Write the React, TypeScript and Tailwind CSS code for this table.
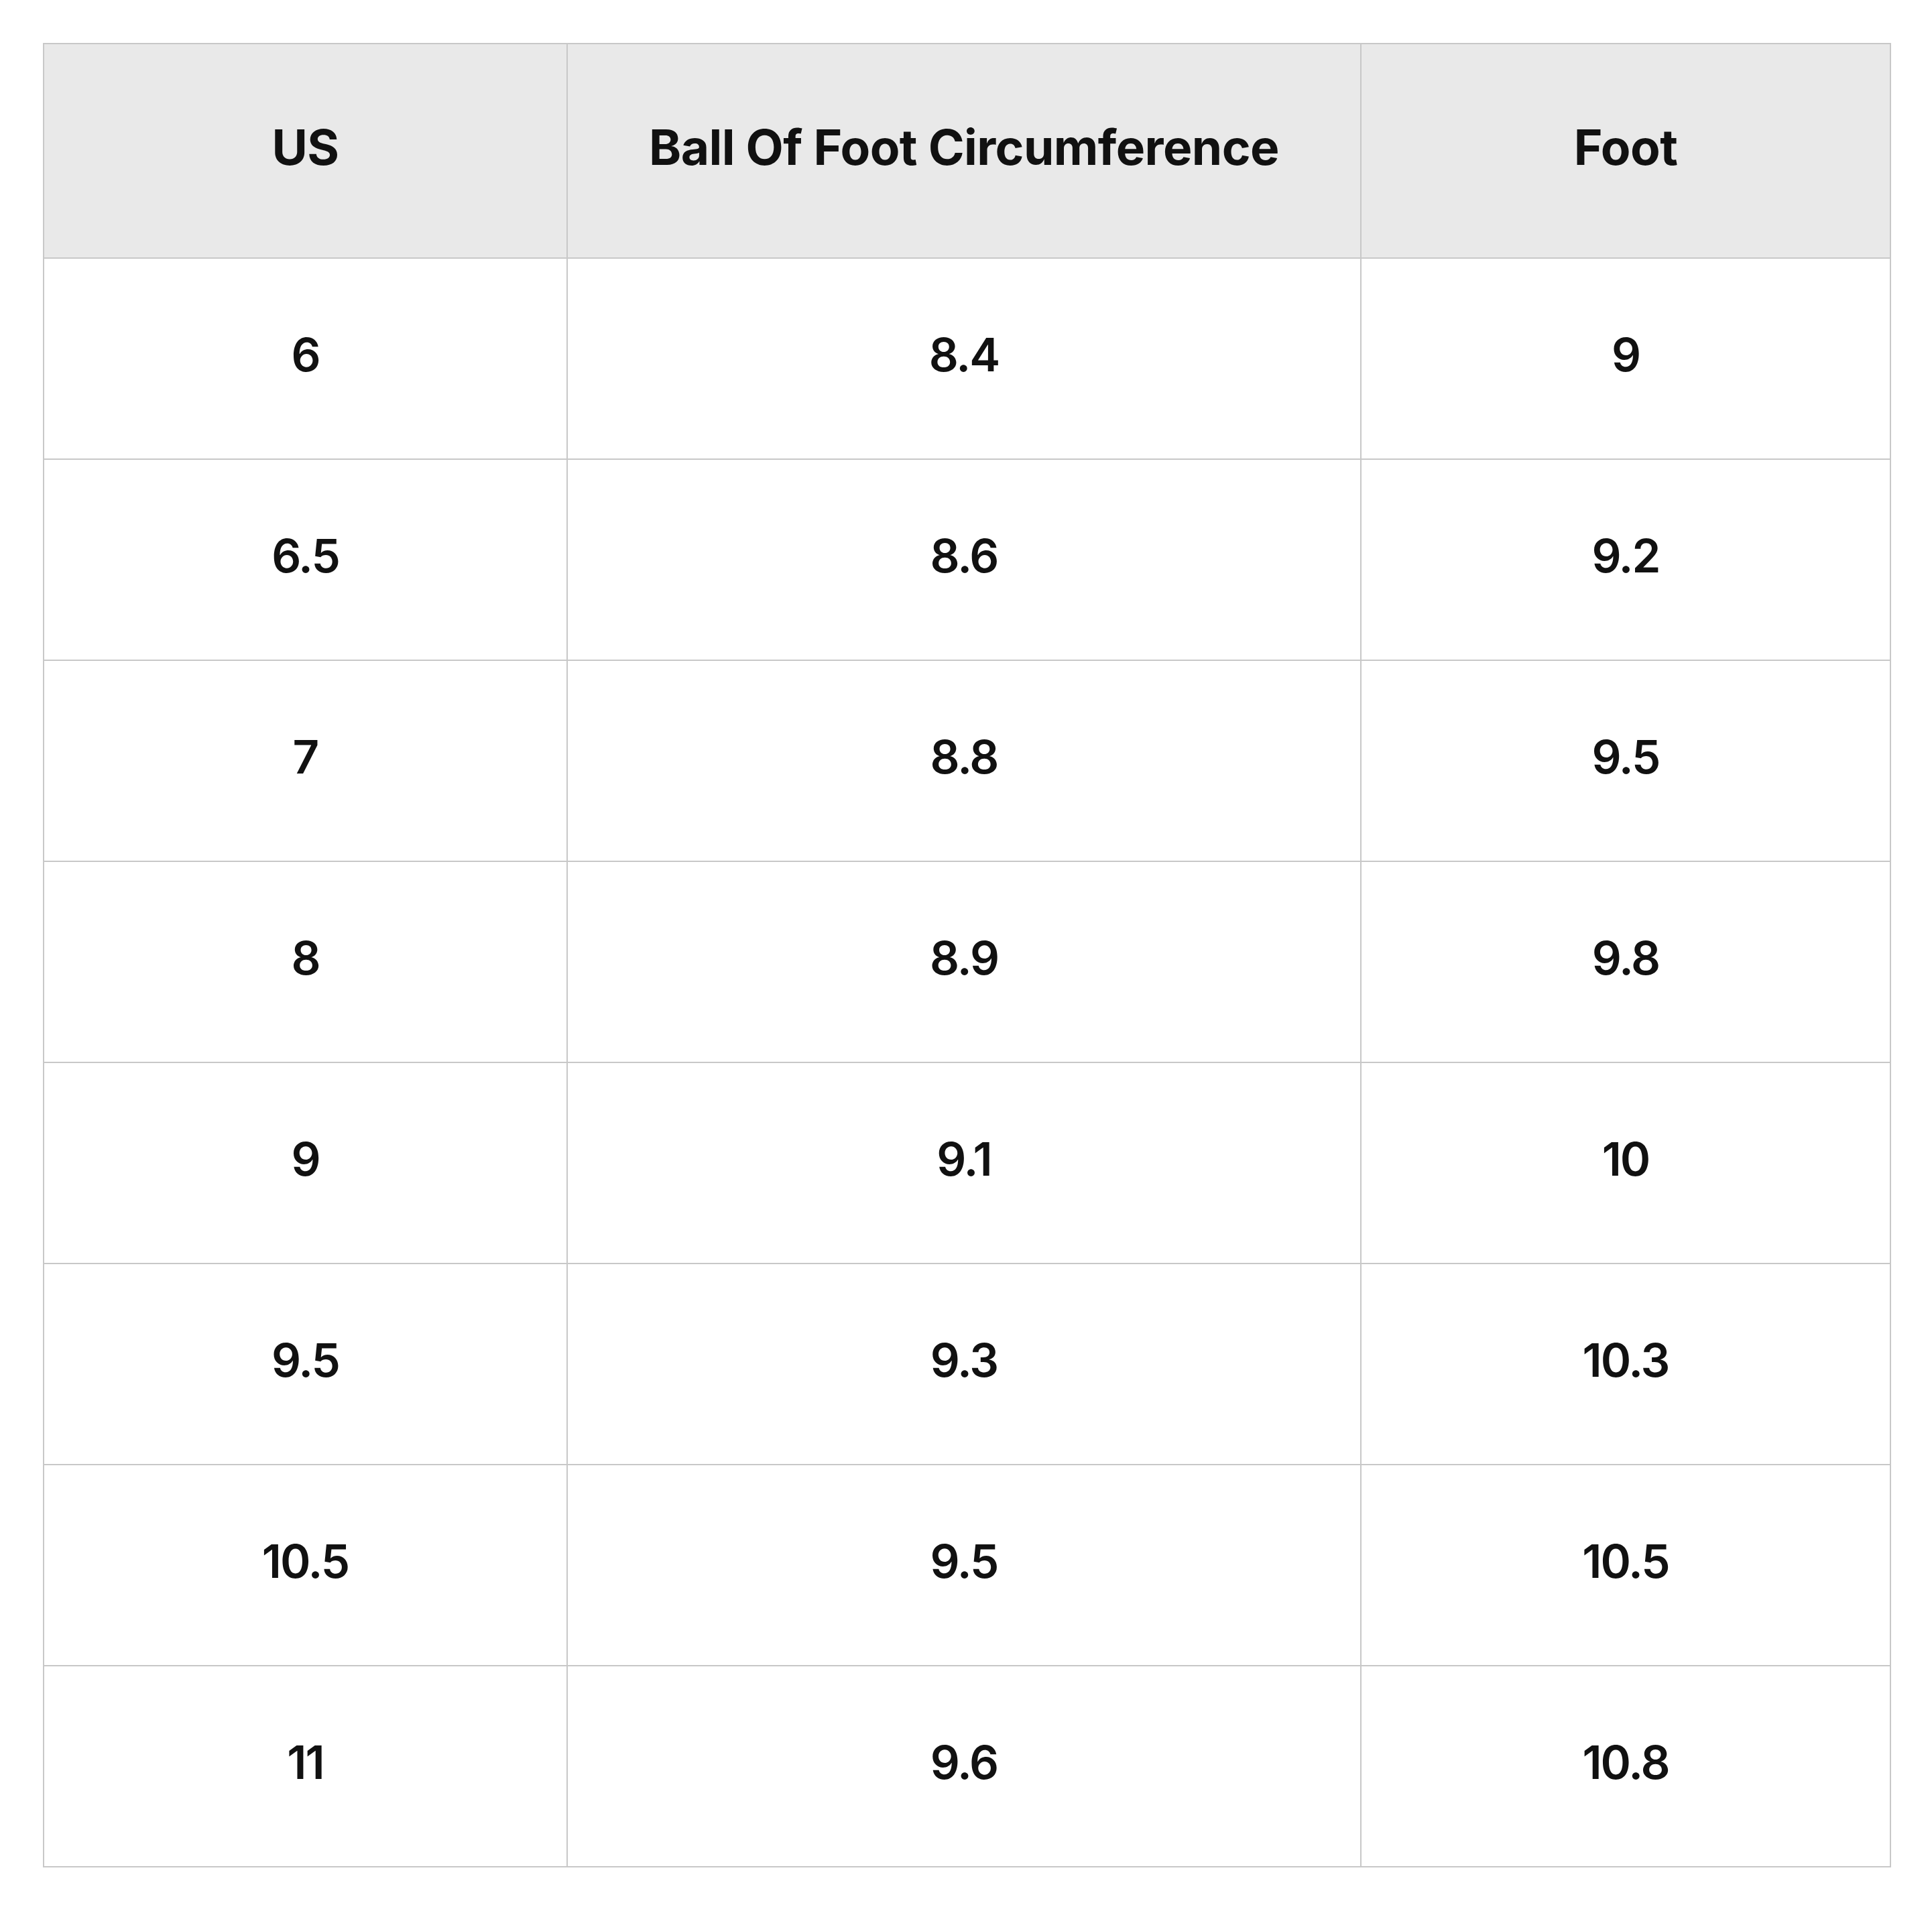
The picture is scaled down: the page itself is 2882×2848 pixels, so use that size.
import React from "react";

const rows: [string, string, string][] = [
  ["6", "8.4", "9"],
  ["6.5", "8.6", "9.2"],
  ["7", "8.8", "9.5"],
  ["8", "8.9", "9.8"],
  ["9", "9.1", "10"],
  ["9.5", "9.3", "10.3"],
  ["10.5", "9.5", "10.5"],
  ["11", "9.6", "10.8"],
];

export default function App() {
  return (
    <div className="w-[2882px] h-[2848px] bg-white pt-[64px] pl-[64px]" style={{ fontFamily: "Inter, 'Noto Sans', sans-serif" }}>
      <table className="table-fixed border-collapse w-[2755px] text-[#111111]">
        <colgroup>
          <col className="w-[781px]" />
          <col className="w-[1184px]" />
          <col className="w-[790px]" />
        </colgroup>
        <thead>
          <tr className="h-[320px] bg-[#e9e9e9]">
            {["US", "Ball Of Foot Circumference", "Foot"].map((h) => (
              <th key={h} className="border-2 border-[#c8c8c8] text-center align-middle font-bold text-[73px] tracking-[-0.6px] leading-none pb-[12px]">
                {h}
              </th>
            ))}
          </tr>
        </thead>
        <tbody>
          {rows.map((r, i) => (
            <tr key={i} className="h-[300px]">
              {r.map((c, j) => (
                <td key={j} className="border-2 border-[#c8c8c8] text-center align-middle font-semibold text-[69px] tracking-[-2px] leading-none pb-[12px]">
                  {c}
                </td>
              ))}
            </tr>
          ))}
        </tbody>
      </table>
    </div>
  );
}
